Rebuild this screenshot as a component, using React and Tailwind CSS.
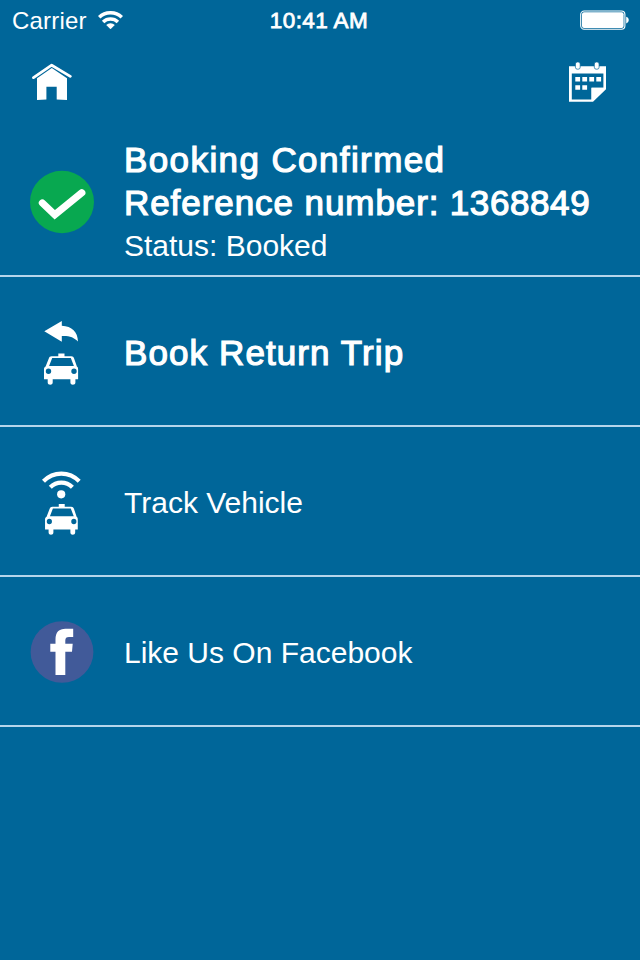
import React from "react";

// --- STATUS BAR ---
const StatusBar = () => (
  <div className="grid h-10 grid-cols-3 items-center pl-3 pr-[11px]">
    <div className="flex items-center gap-[11px] pt-0.5">
      <span className="text-2xl leading-none tracking-[0.2px]">Carrier</span>
      <svg width="25" height="18" viewBox="0 0 25 18" fill="none" stroke="currentColor" strokeWidth="3.5" className="-mt-0.5">
        <path d="M1.2 6.3a16.3 16.3 0 0 1 22.6 0" />
        <path d="M5.1 10.9a10.7 10.7 0 0 1 14.8 0" />
        <path d="M8.2 14a6 6 0 0 1 8.6 0L12.5 18.2z" fill="currentColor" stroke="none" />
      </svg>
    </div>
    <span className="pr-[3px] pt-0.5 text-center text-[22.5px] leading-none tracking-[0.4px] [-webkit-text-stroke:0.8px_white]">10:41 AM</span>
    <svg width="49" height="20" viewBox="0 0 49 20" className="justify-self-end">
      <rect x="0.7" y="1" width="44.2" height="18.2" rx="3.5" fill="none" stroke="currentColor" strokeWidth="1.1" />
      <rect x="2" y="2.3" width="41.6" height="15.6" rx="2" fill="currentColor" />
      <path d="M46.2 6.8c3.4.8 3.4 5.8 0 6.6z" fill="currentColor" />
    </svg>
  </div>
);

// --- NAV ICONS ---
const HomeIcon = () => (
  <svg width="40" height="38" viewBox="0 0 40 38">
    <path d="M5 15.2 19.8 5 35 15.2V36.9l-10.3-.3V23.7H14.4v12.9l-9.4.3z" fill="currentColor" />
    <path d="M1.5 14.6 19.7 2.2 38.3 13.4" fill="none" stroke="currentColor" strokeWidth="2.8" strokeLinecap="round" strokeLinejoin="round" />
  </svg>
);

const CalendarIcon = () => (
  <svg width="38" height="42" viewBox="0 0 38 42">
    <path fillRule="evenodd" d="M0 4.2h37v23L24 39.8H0zM2.8 11.4v26.2h19.7V25.8H34.4V11.4z" fill="currentColor" />
    <path d="M22.5 25.8H36L22.5 38.6z" fill="currentColor" />
    <path d="M6.3 15h4.8v4.6H6.3zM13.3 15h4.8v4.6h-4.8zM20.3 15h4.8v4.6h-4.8zM27.3 15h4.8v4.6h-4.8zM6.3 23.2h4.8v4.6H6.3zM13.3 23.2h4.8v4.6h-4.8z" fill="currentColor" />
    <g fill="currentColor" stroke="#006699" strokeWidth="0.7">
      <rect x="6.4" y="0" width="4.8" height="7.2" rx="2" />
      <rect x="25.3" y="0" width="4.8" height="7.2" rx="2" />
    </g>
  </svg>
);

// --- ROW ICONS ---
const CheckIcon = () => (
  <svg width="64" height="64" viewBox="0 0 64 64">
    <ellipse cx="32" cy="32" rx="32" ry="31.2" fill="#08a850" />
    <path d="M12.4 33 24.8 44.8 51.8 22.7" fill="none" stroke="white" strokeWidth="7.2" strokeLinecap="round" />
  </svg>
);

const Taxi = () => (
  <g>
    <path d="M28.3 37V33.5h6.2V37z" fill="currentColor" />
    <path
      fillRule="evenodd"
      d="M21.6 36.3H41.3c1.5 0 2.3.8 2.8 2.1l2.8 8c.9.5 1.2 1.3 1.2 2.5V59.3H45.4v3.2c0 3-5 3-5 0v-3.2H22.7v3.2c0 3-5 3-5 0v-3.2H14V48.9c0-1.2.6-2 1.6-2.5l3.2-8c.5-1.3 1.3-2.1 2.8-2.1zM22.2 38.1 19.1 46H43.9L40.8 38.1zM18.5 48.6a2.7 2.7 0 1 0 0 5.4 2.7 2.7 0 1 0 0-5.4zM44 48.6a2.7 2.7 0 1 0 0 5.4 2.7 2.7 0 1 0 0-5.4z"
      fill="currentColor"
    />
  </g>
);

const ReturnTripIcon = () => (
  <svg width="64" height="64" viewBox="0 0 64 64" className="overflow-visible">
    <path d="M14.3 11.3 31.8 1V5.7C42 6.3 47.8 11.7 48 21.6 44.2 17.3 39 15.6 31.8 16V21.8z" fill="currentColor" />
    <Taxi />
  </svg>
);

const TrackIcon = () => (
  <svg width="64" height="64" viewBox="0 0 64 64" className="overflow-visible">
    <g fill="none" stroke="currentColor" strokeWidth="4.2">
      <path d="M13.5 11.2C23.5 1 39.2 1 49.2 11.2" />
      <path d="M20.3 17.3C26.5 11 36.2 11 42.4 17.3" />
    </g>
    <circle cx="31.2" cy="24.3" r="4.1" fill="currentColor" />
    <g transform="translate(1.6 1) scale(0.96 0.985)">
      <Taxi />
    </g>
  </svg>
);

const FacebookIcon = () => (
  <svg width="64" height="64" viewBox="0 0 64 64">
    <ellipse cx="32" cy="32" rx="31.4" ry="30.8" fill="#415a99" />
    <path d="M25.5 55V31.8H20.3V23.8H25.5V19.5C25.5 12.2 29 8.8 35.5 8.8H43.2V17H39C36.4 17 35.3 18 35.3 20.5V23.8H42.7L42 31.8H35.3V55z" fill="white" />
  </svg>
);

const Row = ({ icon: Icon, children }) => (
  <li className="flex h-[150px] items-center gap-[30px] border-b-2 border-[#b5d5eb] pl-[30px] pt-0.5">
    <Icon />
    <div className="whitespace-nowrap text-3xl leading-[43px]">{children}</div>
  </li>
);

const Heading = ({ tracking = "tracking-[1.1px]", children }) => (
  <p className={`text-[35px] leading-[43px] [-webkit-text-stroke:1.2px_white] ${tracking}`}>{children}</p>
);

export default function App() {
  return (
    <div className="h-[960px] w-[640px] overflow-hidden bg-[#006699] font-['Liberation_Sans',Arial,sans-serif] text-white">
      <StatusBar />

      <header className="flex h-[87px] items-start justify-between pl-8 pr-[33px] pt-[22px]">
        <button aria-label="Home" className="pt-px">
          <HomeIcon />
        </button>
        <button aria-label="Bookings">
          <CalendarIcon />
        </button>
      </header>

      <ul>
        <Row icon={CheckIcon}>
          <Heading tracking="tracking-[1.4px]">Booking Confirmed</Heading>
          <Heading tracking="tracking-[0.93px]">
            Reference number:<span className="tracking-[0.6px]"> 1368849</span>
          </Heading>
          <p>Status: Booked</p>
        </Row>
        <Row icon={ReturnTripIcon}>
          <Heading>Book Return Trip</Heading>
        </Row>
        <Row icon={TrackIcon}>Track Vehicle</Row>
        <Row icon={FacebookIcon}>Like Us On Facebook</Row>
      </ul>
    </div>
  );
}
